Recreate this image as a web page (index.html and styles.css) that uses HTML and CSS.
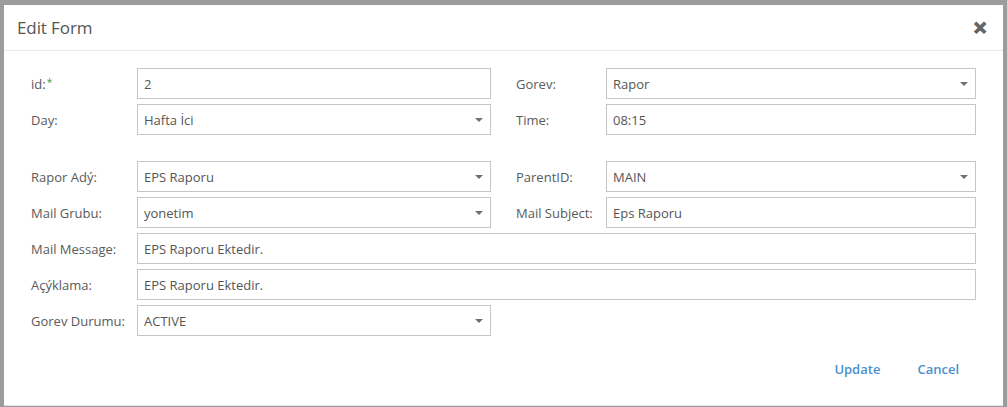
FILE: index.html
```html
<!DOCTYPE html>
<html>
<head>
<meta charset="utf-8">
<link rel="stylesheet" href="styles.css">
</head>
<body>
<div class="backdrop">
  <div class="dialog">
    <div class="header">
      <div class="title">Edit Form</div>
      <div class="close">&#x2715;</div>
    </div>
    <div class="body">
      <div class="grid">
        <div class="label">id:<span class="req">*</span></div>
        <div class="input">2</div>
        <div class="label r">Gorev:</div>
        <div class="input select">Rapor<span class="caret"></span></div>

        <div class="label">Day:</div>
        <div class="input select">Hafta İci<span class="caret"></span></div>
        <div class="label r">Time:</div>
        <div class="input">08:15</div>

        <div class="spacer"></div>

        <div class="label">Rapor Adý:</div>
        <div class="input select">EPS Raporu<span class="caret"></span></div>
        <div class="label r">ParentID:</div>
        <div class="input select">MAIN<span class="caret"></span></div>

        <div class="label">Mail Grubu:</div>
        <div class="input select">yonetim<span class="caret"></span></div>
        <div class="label r">Mail Subject:</div>
        <div class="input">Eps Raporu</div>

        <div class="label">Mail Message:</div>
        <div class="input wide">EPS Raporu Ektedir.</div>

        <div class="label">Açýklama:</div>
        <div class="input wide">EPS Raporu Ektedir.</div>

        <div class="label">Gorev Durumu:</div>
        <div class="input select">ACTIVE<span class="caret"></span></div>
      </div>
      <div class="footer">
        <span class="btn">Update</span>
        <span class="btn">Cancel</span>
      </div>
    </div>
  </div>
</div>
</body>
</html>
```
FILE: styles.css
```css
html, body {
  margin: 0;
  padding: 0;
}
body {
  width: 1007px;
  height: 407px;
  overflow: hidden;
  background: #9c9c9c;
  font-family: "Open Sans", "Noto Sans", sans-serif;
}
.backdrop {
  padding: 5px 4px 0 4px;
}
.dialog {
  width: 999px;
  height: 401px;
  background: #fff;
  border-bottom: 1px solid #e6e6e6;
  box-sizing: border-box;
}
.header {
  height: 46px;
  border-bottom: 1px solid #e8e8e8;
  box-sizing: border-box;
  display: flex;
  align-items: center;
  justify-content: space-between;
  padding: 0 16px 0 13px;
}
.title {
  font-size: 17px;
  color: #555;
  letter-spacing: -0.1px;
}
.close {
  font-size: 17px;
  font-weight: bold;
  color: #666;
  -webkit-text-stroke: 1.2px #666;
}
.body {
  padding: 17px 27px 0 27px;
}
.grid {
  display: grid;
  grid-template-columns: 106px 354px 25px 90px 370px;
  row-gap: 5px;
  align-items: center;
}
.label {
  font-size: 13px;
  color: #5a5a5a;
  grid-column: 1;
}
.req {
  color: #3c9a3c;
  font-size: 10px;
  vertical-align: 3px;
  margin-left: 1px;
}
.label.r {
  grid-column: 4;
}
.input {
  height: 31px;
  box-sizing: border-box;
  border: 1px solid #c6c6c6;
  font-size: 13px;
  color: #555;
  padding: 0 6px;
  display: flex;
  align-items: center;
  position: relative;
}
.label + .input {
  grid-column: 2;
}
.label.r + .input {
  grid-column: 5;
}
.input.wide {
  grid-column: 2 / 6 !important;
}
.caret {
  position: absolute;
  right: 7px;
  top: 13px;
  width: 0;
  height: 0;
  border-left: 4.5px solid transparent;
  border-right: 4.5px solid transparent;
  border-top: 4px solid #707070;
}
.spacer {
  grid-column: 1 / 6;
  height: 16px;
}
.footer {
  display: flex;
  justify-content: flex-end;
  gap: 37px;
  padding: 24px 17px 0 0;
}
.btn {
  font-size: 13px;
  font-weight: 600;
  color: #4a8fd0;
}
```
